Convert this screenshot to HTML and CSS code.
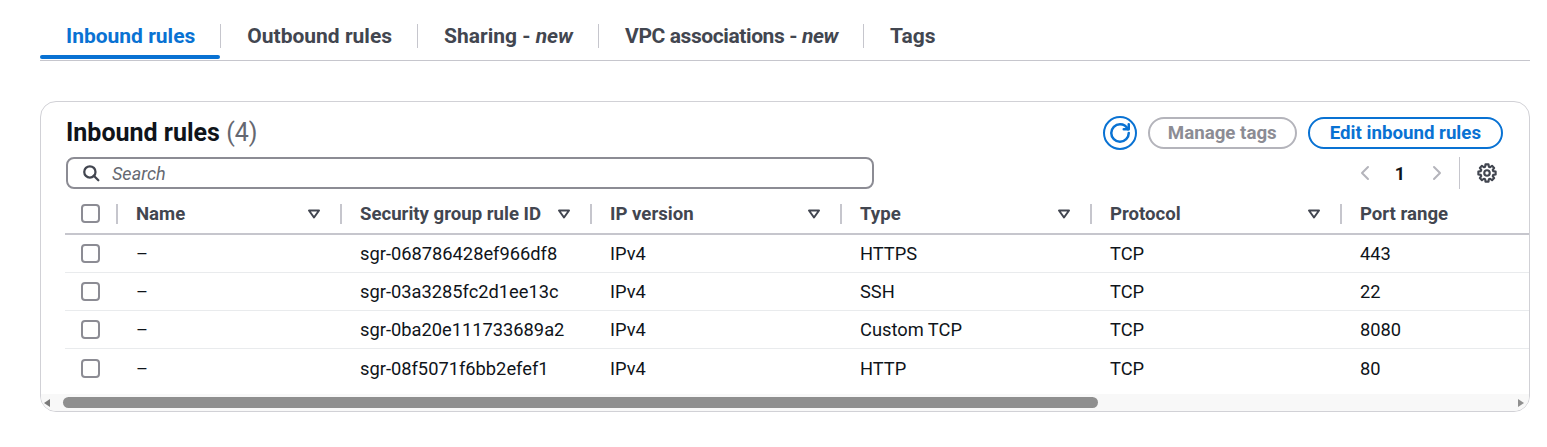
FILE: index.html
```html
<!DOCTYPE html>
<html lang="en">
<head>
<meta charset="utf-8">
<title>Inbound rules</title>
<link rel="stylesheet" href="styles.css">
</head>
<body>
<div class="page">
  <nav class="tabs">
    <div class="tab active"><span class="tab-label">Inbound rules</span><span class="tab-bar"></span></div>
    <span class="tab-sep"></span>
    <div class="tab"><span class="tab-label">Outbound rules</span><span class="tab-bar"></span></div>
    <span class="tab-sep"></span>
    <div class="tab"><span class="tab-label">Sharing -&nbsp;<em>new</em></span><span class="tab-bar"></span></div>
    <span class="tab-sep"></span>
    <div class="tab"><span class="tab-label tight">VPC associations -&nbsp;<em>new</em></span><span class="tab-bar"></span></div>
    <span class="tab-sep"></span>
    <div class="tab"><span class="tab-label">Tags</span><span class="tab-bar"></span></div>
  </nav>

  <section class="card">
    <div class="card-head">
      <h2 class="title">Inbound rules <span class="count">(4)</span></h2>
      <div class="actions">
        <button class="btn-icon" type="button" aria-label="Refresh">
          <svg viewBox="0 0 16 16" width="20" height="20" fill="none" stroke="currentColor" stroke-width="2" stroke-linecap="round" stroke-linejoin="round"><path d="M15 8c0 3.87-3.13 7-7 7s-7-3.13-7-7 3.13-7 7-7c2.79 0 5.2 1.63 6.33 4"/><path d="M15 1v4h-4"/></svg>
        </button>
        <button class="btn btn-disabled" type="button">Manage tags</button>
        <button class="btn btn-normal" type="button">Edit inbound rules</button>
      </div>
      <div class="search">
        <svg viewBox="0 0 16 16" width="18" height="18" fill="none" stroke="#424650" stroke-width="2" stroke-linecap="round"><circle cx="7" cy="7" r="5"/><path d="m14.5 14.5-4-4"/></svg>
        <span class="placeholder">Search</span>
      </div>
      <div class="pager">
        <svg class="chev" viewBox="0 0 16 16" width="16" height="16" fill="none" stroke="currentColor" stroke-width="2" stroke-linecap="round" stroke-linejoin="round"><path d="M11 2 5 8l6 6"/></svg>
        <span class="page-num">1</span>
        <svg class="chev" viewBox="0 0 16 16" width="16" height="16" fill="none" stroke="currentColor" stroke-width="2" stroke-linecap="round" stroke-linejoin="round"><path d="m5 2 6 6-6 6"/></svg>
        <span class="pager-sep"></span>
        <svg class="gear" viewBox="0 0 16 16" width="20" height="20" fill="none" stroke="#424650" stroke-width="1.7" stroke-linejoin="round"><polygon points="12.97,6.48 14.9,6.78 14.9,9.22 12.97,9.52 12.59,10.44 13.73,12.02 12.02,13.73 10.44,12.59 9.52,12.97 9.22,14.9 6.78,14.9 6.48,12.97 5.56,12.59 3.98,13.73 2.27,12.02 3.41,10.44 3.03,9.52 1.1,9.22 1.1,6.78 3.03,6.48 3.41,5.56 2.27,3.98 3.98,2.27 5.56,3.41 6.48,3.03 6.78,1.1 9.22,1.1 9.52,3.03 10.44,3.41 12.02,2.27 13.73,3.98 12.59,5.56"/><circle cx="8" cy="8" r="2.2"/></svg>
      </div>
    </div>

    <div class="table-wrap">
      <div class="row head">
        <div class="cell cb-cell"><span class="checkbox"></span></div>
        <div class="hcell"><span class="col-sep"></span><span class="hlabel">Name</span><svg class="sort" viewBox="0 0 14 14" width="14" height="14" fill="none" stroke="currentColor" stroke-width="2" stroke-linejoin="round"><path d="M2 3.5h10l-5 7z"/></svg></div>
        <div class="hcell"><span class="col-sep"></span><span class="hlabel">Security group rule ID</span><svg class="sort" viewBox="0 0 14 14" width="14" height="14" fill="none" stroke="currentColor" stroke-width="2" stroke-linejoin="round"><path d="M2 3.5h10l-5 7z"/></svg></div>
        <div class="hcell"><span class="col-sep"></span><span class="hlabel">IP version</span><svg class="sort" viewBox="0 0 14 14" width="14" height="14" fill="none" stroke="currentColor" stroke-width="2" stroke-linejoin="round"><path d="M2 3.5h10l-5 7z"/></svg></div>
        <div class="hcell"><span class="col-sep"></span><span class="hlabel">Type</span><svg class="sort" viewBox="0 0 14 14" width="14" height="14" fill="none" stroke="currentColor" stroke-width="2" stroke-linejoin="round"><path d="M2 3.5h10l-5 7z"/></svg></div>
        <div class="hcell"><span class="col-sep"></span><span class="hlabel">Protocol</span><svg class="sort" viewBox="0 0 14 14" width="14" height="14" fill="none" stroke="currentColor" stroke-width="2" stroke-linejoin="round"><path d="M2 3.5h10l-5 7z"/></svg></div>
        <div class="hcell"><span class="col-sep"></span><span class="hlabel">Port range</span><svg class="sort" viewBox="0 0 14 14" width="14" height="14" fill="none" stroke="currentColor" stroke-width="2" stroke-linejoin="round"><path d="M2 3.5h10l-5 7z"/></svg></div>
      </div>
      <div class="row">
        <div class="cell cb-cell"><span class="checkbox"></span></div>
        <div class="cell">–</div>
        <div class="cell">sgr-068786428ef966df8</div>
        <div class="cell">IPv4</div>
        <div class="cell">HTTPS</div>
        <div class="cell">TCP</div>
        <div class="cell">443</div>
      </div>
      <div class="row">
        <div class="cell cb-cell"><span class="checkbox"></span></div>
        <div class="cell">–</div>
        <div class="cell">sgr-03a3285fc2d1ee13c</div>
        <div class="cell">IPv4</div>
        <div class="cell">SSH</div>
        <div class="cell">TCP</div>
        <div class="cell">22</div>
      </div>
      <div class="row">
        <div class="cell cb-cell"><span class="checkbox"></span></div>
        <div class="cell">–</div>
        <div class="cell">sgr-0ba20e111733689a2</div>
        <div class="cell">IPv4</div>
        <div class="cell">Custom TCP</div>
        <div class="cell">TCP</div>
        <div class="cell">8080</div>
      </div>
      <div class="row last">
        <div class="cell cb-cell"><span class="checkbox"></span></div>
        <div class="cell">–</div>
        <div class="cell">sgr-08f5071f6bb2efef1</div>
        <div class="cell">IPv4</div>
        <div class="cell">HTTP</div>
        <div class="cell">TCP</div>
        <div class="cell">80</div>
      </div>
    </div>

    <div class="hscroll">
      <span class="arrow-left"></span>
      <span class="thumb"></span>
      <span class="arrow-right"></span>
    </div>
  </section>
</div>
</body>
</html>
```

FILE: styles.css
```css
* { box-sizing: border-box; }

body {
  margin: 0;
  background: #ffffff;
  font-family: Roboto, "Noto Sans", Arial, sans-serif;
  color: #0f141a;
}

.page {
  padding: 12px 17px 0 40px;
}

/* Tabs */
.tabs {
  display: flex;
  height: 49px;
  border-bottom: 1px solid #c6c6cd;
}

.tab {
  display: flex;
  flex-direction: column;
}

.tab-label {
  flex: 1;
  display: flex;
  align-items: center;
  padding: 5px 25px 0 26px;
  font-size: 21px;
  font-weight: 700;
  color: #424650;
  white-space: nowrap;
}

.tab-label.tight {
  letter-spacing: -0.4px;
}

.tab-label em {
  font-style: italic;
}

.tab-bar {
  height: 4px;
  margin-bottom: 1px;
  border-radius: 2px;
}

.tab.active .tab-label { color: #0972d3; }
.tab.active .tab-bar { background: #0972d3; }

.tab-sep {
  align-self: center;
  width: 1px;
  height: 24px;
  background: #c6c6cd;
}

/* Card */
.card {
  margin-top: 40px;
  border: 1px solid #d1d1d6;
  border-radius: 16px;
  overflow: hidden;
}

.card-head {
  display: grid;
  grid-template-columns: 808px 1fr;
  row-gap: 7px;
  padding: 14px 26px 0 25px;
}

.title {
  margin: 0;
  align-self: center;
  font-size: 25px;
  line-height: 34px;
  font-weight: 700;
  color: #0f141a;
}

.count {
  font-weight: 400;
  color: #656871;
}

.actions {
  justify-self: end;
  display: flex;
  align-items: center;
  gap: 11px;
}

.btn-icon {
  width: 34px;
  height: 34px;
  border: 2px solid #0972d3;
  border-radius: 50%;
  background: #fff;
  color: #0972d3;
  display: flex;
  align-items: center;
  justify-content: center;
  padding: 0;
}

.btn {
  height: 32px;
  padding: 0 20px;
  border-radius: 16px;
  border: 2px solid;
  background: #fff;
  font-family: inherit;
  font-size: 18.7px;
  font-weight: 700;
  line-height: 28px;
}

.btn-disabled {
  padding: 0 18px;
  border-color: #b4b4bb;
  color: #8c8c94;
}

.btn-normal {
  border-color: #0972d3;
  color: #0972d3;
}

.search {
  height: 32px;
  border: 2px solid #8c8c94;
  border-radius: 8px;
  display: flex;
  align-items: center;
  gap: 12px;
  padding-left: 14px;
}

.placeholder {
  font-size: 18px;
  font-style: italic;
  color: #656871;
}

.pager {
  justify-self: end;
  display: flex;
  align-items: center;
  height: 32px;
  padding-right: 6px;
}

.chev {
  color: #b4b4bb;
}

.page-num {
  margin: 0 24px 0 22px;
  font-size: 18px;
  font-weight: 700;
  color: #0f141a;
}

.pager-sep {
  width: 1px;
  height: 32px;
  background: #c6c6cd;
  margin: 0 17px 0 14px;
}

/* Table */
.table-wrap {
  margin-top: 5px;
  padding: 0 0 7px 24px;
  overflow: hidden;
}

.row {
  display: grid;
  grid-template-columns: 51px 224px 250px 250px 250px 250px 250px;
  width: max-content;
  height: 38px;
  border-bottom: 1px solid #e9ebed;
}

.row.last {
  border-bottom: 0;
  height: 38px;
}

.row.head {
  height: 41px;
  border-bottom: 2px solid #c6c6cd;
}

.cell {
  display: flex;
  align-items: center;
  padding-left: 20px;
  font-size: 18.3px;
  color: #0f141a;
  white-space: nowrap;
}

.cb-cell {
  padding-left: 0;
  justify-content: center;
}

.checkbox {
  width: 19px;
  height: 19px;
  border: 2px solid #8c8c94;
  border-radius: 4px;
  background: #fff;
}

.hcell {
  display: flex;
  align-items: center;
  padding-right: 19px;
  color: #424650;
}

.col-sep {
  width: 2px;
  height: 20px;
  background: #c6c6cd;
  margin-right: 18px;
  flex: none;
}

.hlabel {
  flex: 1;
  font-size: 18.6px;
  font-weight: 700;
  white-space: nowrap;
}

.sort {
  flex: none;
  color: #424650;
}

/* Horizontal scrollbar */
.hscroll {
  height: 17px;
  background: #f8f8f8;
  display: flex;
  align-items: center;
  padding: 0 5px 0 3px;
}

.arrow-left {
  width: 0;
  height: 0;
  border-top: 4px solid transparent;
  border-bottom: 4px solid transparent;
  border-right: 6px solid #7a7a7a;
}

.thumb {
  width: 1035px;
  height: 11px;
  margin-left: 13px;
  border-radius: 6px;
  background: #8f8f8f;
}

.arrow-right {
  margin-left: auto;
  width: 0;
  height: 0;
  border-top: 4px solid transparent;
  border-bottom: 4px solid transparent;
  border-left: 6px solid #8f8f8f;
}
```
